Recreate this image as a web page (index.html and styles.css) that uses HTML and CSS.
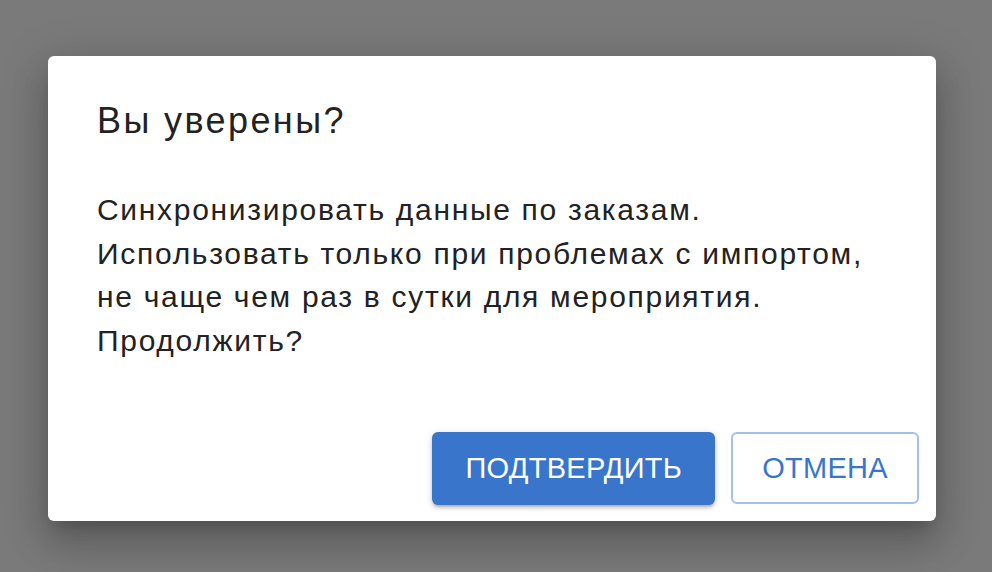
FILE: index.html
```html
<!DOCTYPE html>
<html lang="ru">
<head>
<meta charset="utf-8">
<title>Вы уверены?</title>
<link rel="stylesheet" href="styles.css">
</head>
<body>
<div class="overlay">
  <div class="dialog">
    <h2 class="title">Вы уверены?</h2>
    <div class="text">Синхронизировать данные по заказам.<br>Использовать только при проблемах с импортом,<br>не чаще чем раз в сутки для мероприятия.<br>Продолжить?</div>
    <div class="actions">
      <button class="btn btn-primary">Подтвердить</button>
      <button class="btn btn-outline">Отмена</button>
    </div>
  </div>
</div>
</body>
</html>
```

FILE: styles.css
```css
html, body {
  margin: 0;
  padding: 0;
  height: 100%;
}
body {
  background: #7a7a7a;
  font-family: "Liberation Sans", Arial, sans-serif;
  overflow: hidden;
}
.overlay {
  padding: 56px 0 0 48px;
}
.dialog {
  width: 888px;
  height: 465px;
  box-sizing: border-box;
  background: #fff;
  border-radius: 6px;
  box-shadow: 0 11px 15px -7px rgba(0,0,0,0.2), 0 24px 38px 3px rgba(0,0,0,0.14), 0 9px 46px 8px rgba(0,0,0,0.12);
  display: flex;
  flex-direction: column;
  padding: 0 17px 16px 49px;
}
.title {
  margin: 0;
  padding-top: 37px;
  font-size: 36px;
  font-weight: 400;
  letter-spacing: 2.4px;
  line-height: 56px;
  color: #222;
}
.text {
  margin-top: 39px;
  font-size: 30px;
  letter-spacing: 1.7px;
  line-height: 43.7px;
  color: #222;
}
.actions {
  margin-top: auto;
  display: flex;
  justify-content: flex-end;
  gap: 16px;
}
.btn {
  font-family: "Liberation Sans", Arial, sans-serif;
  font-size: 29px;
  letter-spacing: 0.3px;
  text-transform: uppercase;
  height: 73px;
  border-radius: 6px;
  cursor: pointer;
}
.btn-primary {
  background: #3a75cc;
  color: #fff;
  border: none;
  padding: 0 33px;
  box-shadow: 0 3px 3px -2px rgba(0,0,0,0.2), 0 3px 4px 0 rgba(0,0,0,0.14), 0 1px 8px 0 rgba(0,0,0,0.12);
}
.btn-outline {
  background: #fff;
  color: #3a75cc;
  border: 2px solid #a3c0ea;
  padding: 0 29px;
  height: 72px;
  margin-bottom: 1px;
}
```
